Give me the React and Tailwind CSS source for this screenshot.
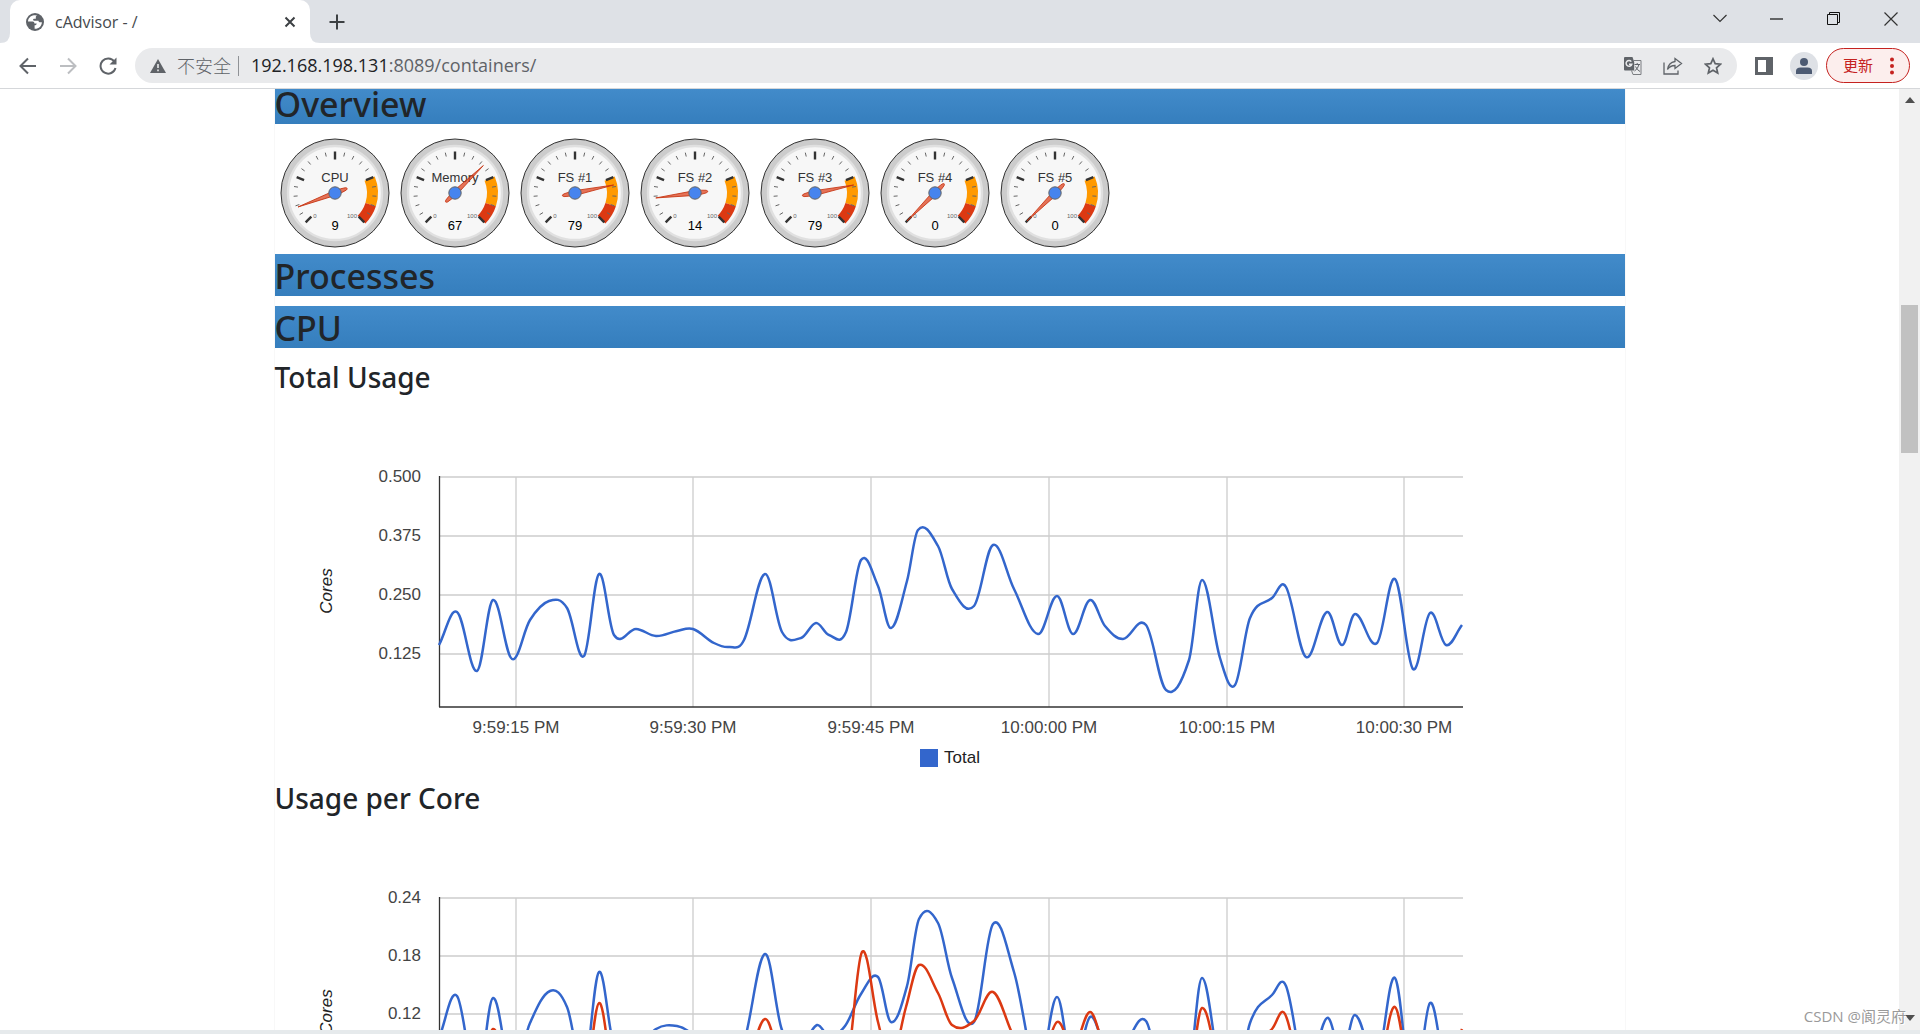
import React from "react";

const UI = "font-['Open_Sans','Noto_Sans_CJK_SC',sans-serif]";

const GRID_X = [
  [516, "9:59:15 PM"],
  [693, "9:59:30 PM"],
  [871, "9:59:45 PM"],
  [1049, "10:00:00 PM"],
  [1227, "10:00:15 PM"],
  [1404, "10:00:30 PM"],
];

const TOTAL = [
  [439, 645], [457, 612], [477, 671], [493, 600], [512, 659], [530, 620], [549, 601], [567, 608],
  [584, 656], [599, 574], [614, 635], [636, 629], [656, 636], [677, 631], [693, 629], [714, 643],
  [729, 647], [744, 640], [765, 574], [782, 632], [801, 638], [816, 623], [829, 635], [846, 632],
  [861, 560], [878, 586], [891, 628], [907, 581], [918, 530], [938, 546], [952, 589], [974, 606],
  [993, 545], [1014, 589], [1038, 634], [1057, 596], [1073, 634], [1090, 600], [1105, 626],
  [1123, 639], [1146, 625], [1166, 690], [1189, 660], [1202, 580], [1220, 658], [1235, 685],
  [1250, 618], [1272, 598], [1286, 587], [1306, 657], [1327, 612], [1342, 645], [1355, 614],
  [1377, 643], [1395, 579], [1413, 669], [1430, 613], [1446, 645], [1462, 625],
];

const CORE_BLUE = [
  [439, 1038], [457, 996], [477, 1085], [493, 998], [512, 1075], [530, 1023], [550, 991], [567, 1007],
  [584, 1070], [599, 972], [614, 1045], [636, 1050], [656, 1029], [677, 1026], [693, 1035],
  [714, 1060], [729, 1062], [744, 1042], [765, 954], [782, 1030], [801, 1045], [817, 1025],
  [829, 1036], [845, 1026], [861, 994], [878, 977], [891, 1022], [907, 986], [919, 919], [938, 923],
  [952, 978], [974, 1022], [993, 924], [1014, 972], [1038, 1072], [1057, 997], [1073, 1070],
  [1090, 1017], [1105, 1045], [1123, 1046], [1146, 1021], [1166, 1098], [1189, 1070], [1202, 978],
  [1220, 1070], [1235, 1098], [1250, 1023], [1272, 995], [1286, 986], [1306, 1075], [1327, 1018],
  [1342, 1055], [1355, 1015], [1377, 1060], [1395, 978], [1413, 1098], [1430, 1003], [1446, 1068],
  [1462, 1045],
];

const CORE_RED = [
  [439, 1060], [457, 1050], [477, 1090], [493, 1029], [512, 1080], [549, 1045], [584, 1090],
  [599, 1003], [614, 1075], [677, 1080], [744, 1070], [765, 1019], [782, 1060], [816, 1045],
  [846, 1068], [862, 952], [878, 1022], [891, 1062], [906, 1007], [919, 965], [938, 993],
  [952, 1025], [974, 1021], [993, 992], [1014, 1037], [1038, 1070], [1057, 1022], [1073, 1048],
  [1090, 1012], [1105, 1045], [1146, 1048], [1166, 1100], [1189, 1080], [1202, 1008], [1220, 1070],
  [1235, 1095], [1250, 1050], [1272, 1029], [1285, 1014], [1306, 1090], [1342, 1060], [1377, 1075],
  [1395, 1007], [1413, 1095], [1430, 1045], [1446, 1075], [1462, 1029],
];

// Smooth curve through the samples, with each slope taken from the neighbours.
function curve(points) {
  const slope = points.map((p, i) => {
    const a = points[i - 1] || p;
    const b = points[i + 1] || p;
    return (b[1] - a[1]) / (b[0] - a[0]);
  });
  let d = `M${points[0][0]},${points[0][1]}`;
  for (let i = 1; i < points.length; i++) {
    const [x0, y0] = points[i - 1];
    const [x1, y1] = points[i];
    const h = (x1 - x0) * 0.36;
    d += `C${x0 + h},${y0 + slope[i - 1] * h} ${x1 - h},${y1 - slope[i] * h} ${x1},${y1}`;
  }
  return d;
}

function Chart({ top, rows, ticks, series, legend, label }) {
  return (
    <svg
      viewBox={`275 ${top - 79} 1350 371`}
      role="img"
      aria-label={label}
      className="block w-full font-['Liberation_Sans',sans-serif] text-[17px]"
    >
      {rows.map((dy) => (
        <path key={dy} d={`M439 ${top + dy}H1463`} stroke="#ccc" strokeWidth="1.3" />
      ))}
      {GRID_X.map(([x]) => (
        <path key={x} d={`M${x} ${top}V${top + 230}`} stroke="#ccc" strokeWidth="1.3" />
      ))}
      <path d={`M439.5 ${top - 1}V${top + 230}`} stroke="#333" strokeWidth="1.3" />
      <path d={`M439 ${top + 230}H1463`} stroke="#333" strokeWidth="1.3" />
      {series.map(([color, pts]) => (
        <path key={color} d={curve(pts)} fill="none" stroke={color} strokeWidth="2.5" />
      ))}
      {ticks.map((t, i) => (
        <text key={t} x="421" y={top + rows[i] + 5} textAnchor="end" fill="#444">{t}</text>
      ))}
      {GRID_X.map(([x, t]) => (
        <text key={t} x={x} y={top + 256} textAnchor="middle" fill="#444">{t}</text>
      ))}
      <text
        transform={`translate(332 ${top + 114}) rotate(-90)`}
        textAnchor="middle"
        fontStyle="italic"
        fill="#222"
      >
        Cores
      </text>
      {legend && (
        <>
          <rect x="920" y={top + 272} width="18" height="18" fill="#3366cc" />
          <text x="944" y={top + 286} fill="#222">{legend}</text>
        </>
      )}
    </svg>
  );
}

function polar(r, value) {
  const a = ((225 - value * 2.7) * Math.PI) / 180;
  return [60 + r * Math.cos(a), 60 - r * Math.sin(a)];
}

function band(from, to) {
  const p = [polar(43, from), polar(43, to), polar(32, to), polar(32, from)].map((q) => q.join(" "));
  return `M${p[0]}A43 43 0 0 1 ${p[1]}L${p[2]}A32 32 0 0 0 ${p[3]}Z`;
}

function Gauge({ name, value }) {
  return (
    <svg
      viewBox="0 0 120 120"
      role="img"
      aria-label={`${name} ${value}`}
      className="size-[120px] font-['Liberation_Sans',sans-serif]"
    >
      <circle cx="60" cy="60" r="54" fill="#ccc" stroke="#333" strokeWidth="1" />
      <circle cx="60" cy="60" r="47" fill="#f7f7f7" stroke="#e0e0e0" strokeWidth="2.4" />
      <path d={band(75, 90)} fill="#ff9900" />
      <path d={band(90, 100)} fill="#dc3912" />
      {Array.from({ length: 21 }, (_, i) => {
        const major = i % 5 === 0;
        const [x1, y1] = polar(41.5, i * 5);
        const [x2, y2] = polar(major ? 33.5 : 37.5, i * 5);
        return (
          <path
            key={i}
            d={`M${x1} ${y1}L${x2} ${y2}`}
            stroke={major ? "#333" : "#666"}
            strokeWidth={major ? 2.4 : 1}
          />
        );
      })}
      <text x="60" y="49" textAnchor="middle" fontSize="13" fill="#333">{name}</text>
      <text x="40" y="85" textAnchor="middle" fontSize="6" fill="#666">0</text>
      <text x="77" y="85" textAnchor="middle" fontSize="6" fill="#666">100</text>
      <text x="60" y="97" textAnchor="middle" fontSize="13" fill="#000">{value}</text>
      <g transform={`rotate(${value * 2.7 - 225} 60 60)`}>
        <path
          d="M99.500 60L60 62.400Q52 62 48.500 61.300Q45.500 60 48.500 58.700Q52 58 60 57.600Z"
          fill="#dc3912"
          fillOpacity="0.7"
          stroke="#c63310"
          strokeWidth="0.8"
        />
      </g>
      <circle cx="60" cy="60" r="6.200" fill="#4684ee" stroke="#666" strokeWidth="1" />
    </svg>
  );
}

function Bar({ size = "h-[42px] leading-[44px]", children }) {
  return (
    <h2 className={`bg-linear-to-b from-[#428bca] to-[#357ebd] font-['Noto_Sans',sans-serif] text-[34px] font-medium ${size}`}>
      {children}
    </h2>
  );
}

function Sub({ children }) {
  return (
    <h3 className="h-[50px] pt-2 font-['Noto_Sans',sans-serif] text-[28px] leading-[42px] font-medium">{children}</h3>
  );
}

function IconButton({ label, className = "", children }) {
  return (
    <button type="button" aria-label={label} className={`flex shrink-0 items-center justify-center ${className}`}>
      {children}
    </button>
  );
}

function TabStrip() {
  return (
    <header className="flex h-[43px] shrink-0 items-end bg-[#dee1e6]">
      <svg width="10" height="10" className="shrink-0"><path d="M10 0V10H0Q10 10 10 0Z" fill="#fff" /></svg>
      <div className="flex h-[43px] w-[300px] items-center rounded-t-[10px] bg-white pr-2 pl-4">
        <svg width="18" height="18" viewBox="0 0 18 18" className="shrink-0">
          <circle cx="9" cy="9" r="9" fill="#5f6368" />
          <path d="M8 2.200C4.500 2.600 2 5.400 2 8.600h4.600c1.300 0 1.800.8 1.800 1.900h2.300c0 1.300-.8 1.700-2.100 1.800v3.500c3.900.3 7.200-2.600 7.300-6.500h-1.500c-1 0-1.900-.4-1.900-1.500H8.200c-1.200 0-1.600-1.700-.4-2h2V4.300c0-1 .6-1.500 1.500-1.700Q9.500 2 8 2.200Z" fill="#fff" />
          <path d="M2 9.500l4 3.800v1.800Q2.400 13.600 2 9.500Z" fill="#5f6368" />
        </svg>
        <span className="ml-[11px] flex-1 text-base text-[#45494d]">cAdvisor - /</span>
        <IconButton label="Close tab" className="size-6">
          <svg width="12" height="12"><path d="M1.500 1.500l9 9M10.500 1.500l-9 9" stroke="#3c4043" strokeWidth="2" /></svg>
        </IconButton>
      </div>
      <svg width="10" height="10" className="shrink-0"><path d="M0 0V10H10Q0 10 0 0Z" fill="#fff" /></svg>
      <IconButton label="New tab" className="h-[43px] w-[34px]">
        <svg width="16" height="16"><path d="M8 .5v15M.5 8h15" stroke="#3c4043" strokeWidth="2" /></svg>
      </IconButton>
      <div className="ml-auto flex h-[37px] items-center self-start">
        <IconButton label="Search tabs" className="h-full w-[57px]">
          <svg width="14" height="9"><path d="M.5 1l6.500 6.500L13.500 1" fill="none" stroke="#333" strokeWidth="1.200" /></svg>
        </IconButton>
        <IconButton label="Minimize" className="h-full w-[57px]">
          <svg width="13" height="2"><path d="M0 1h13" stroke="#111" strokeWidth="1.200" /></svg>
        </IconButton>
        <IconButton label="Restore" className="h-full w-[57px]">
          <svg width="14" height="14" fill="none" stroke="#111"><path d="M.5 2.500h10v10H.5ZM2.500 2.500V.5h10v10h-2" /></svg>
        </IconButton>
        <IconButton label="Close" className="h-full w-[58px]">
          <svg width="14" height="14"><path d="M.5.5l13 13M13.500.5l-13 13" stroke="#333" strokeWidth="1.200" /></svg>
        </IconButton>
      </div>
    </header>
  );
}

function Toolbar() {
  return (
    <nav className="flex h-[46px] shrink-0 items-center border-b border-[#d5d7da] bg-white pr-[10px] pl-2">
      <IconButton label="Back" className="size-10">
        <svg width="18" height="18" fill="none" stroke="#5f6368" strokeWidth="2"><path d="M17 9H2M9 1.500L1.500 9L9 16.500" /></svg>
      </IconButton>
      <IconButton label="Forward" className="size-10">
        <svg width="18" height="18" fill="none" stroke="#bcbec1" strokeWidth="2"><path d="M1 9h15M9 1.500L16.500 9L9 16.500" /></svg>
      </IconButton>
      <IconButton label="Reload" className="size-10">
        <svg width="18" height="18" fill="none" stroke="#5f6368" strokeWidth="2">
          <path d="M15.300 4.500A7.600 7.600 0 1 0 16.500 11" />
          <path d="M17.500 .5V7.500H10.500Z" fill="#5f6368" stroke="none" />
        </svg>
      </IconButton>
      <div className="ml-[7px] flex h-[35px] flex-1 items-center rounded-full bg-[#e9eaec] pr-2 pl-[15px]">
        <svg width="16" height="14" viewBox="0 0 16 14" className="shrink-0">
          <path d="M8 0l8 14H0Z" fill="#5f6368" />
          <path d="M8 5v4M8 10.500v1.700" stroke="#e9eaec" strokeWidth="1.600" />
        </svg>
        <span className="ml-[11px] text-lg leading-6 font-light text-[#5f6368]">不安全</span>
        <span className="ml-[7px] h-5 w-px bg-[#8f9296]" />
        <a href="#address" className="ml-3 flex-1 pb-0.5 text-lg leading-6 text-[#5f6368]">
          <span className="text-[#202124]">192.168.198.131</span>:8089/containers/
        </a>
        <IconButton label="Translate" className="size-10">
          <svg width="18" height="18" viewBox="0 0 18 18">
            <path d="M1 0h7.500l1.700 5v8.500H1a1 1 0 0 1-1-1V1A1 1 0 0 1 1 0Z" fill="#5f6368" />
            <path d="M9.500 3.500H17v14H9l-1.500-4" fill="none" stroke="#7a7d81" strokeWidth="1" />
            <path d="M7.300 4.600A2.900 2.900 0 1 0 7.800 7.200H5" fill="none" stroke="#e9eaec" strokeWidth="1.500" />
            <path d="M10.500 7.500H16M13.200 6v1.500M15 7.500Q14 12 10.500 14M11.500 9.500Q13 13 16 14.500" fill="none" stroke="#5f6368" />
          </svg>
        </IconButton>
        <IconButton label="Share" className="size-10">
          <svg width="20" height="18" viewBox="0 0 20 18" fill="none" stroke="#5f6368" strokeWidth="1.300">
            <path d="M1 5.500V17H15V13.500" />
            <path d="M12 1.500L18.500 6.500L12 11.500V8.500Q7 8.500 4.500 12.500Q5.500 5.500 12 4.500Z" />
          </svg>
        </IconButton>
        <IconButton label="Bookmark" className="ml-1 size-8">
          <svg width="18" height="18" viewBox="0 0 18 18"><path d="M9 1.800l2.200 4.900 5.300.5-4 3.600 1.200 5.200L9 13.200 4.300 16l1.200-5.200-4-3.600 5.300-.5Z" fill="none" stroke="#5f6368" strokeWidth="1.700" /></svg>
        </IconButton>
      </div>
      <IconButton label="Side panel" className="ml-[7px] size-10">
        <svg width="18" height="18"><path d="M0 0h18v18H0ZM3 3v12h8V3Z" fill="#5f6368" fillRule="evenodd" /></svg>
      </IconButton>
      <IconButton label="Profile" className="ml-[6px] size-7 rounded-full bg-[#dee1e6]">
        <svg width="16" height="16" fill="#4d5b73"><circle cx="8" cy="4" r="4" /><path d="M0 16v-3q0-3.500 4.500-3.500h7Q16 9.500 16 13v3Z" /></svg>
      </IconButton>
      <button
        type="button"
        className="ml-2 flex h-[35px] w-[84px] shrink-0 items-center justify-between rounded-full border border-[#c5221f] bg-[#fceeed] pr-[15px] pl-4 text-[15px] text-[#c5221f]"
      >
        更新
        <svg width="4" height="18" fill="#c5221f"><circle cx="2" cy="2.500" r="2" /><circle cx="2" cy="9" r="2" /><circle cx="2" cy="15.500" r="2" /></svg>
      </button>
    </nav>
  );
}

export default function App() {
  return (
    <div className={`relative flex h-screen flex-col overflow-hidden bg-white ${UI}`}>
      <TabStrip />
      <Toolbar />
      <div className="flex min-h-0 flex-1">
        <main className="min-w-0 flex-1 overflow-y-auto [scrollbar-width:none]">
          <div className="mx-auto max-w-[1352px] border-x border-[#f8f8f8] text-[#212529]">
            <Bar size="h-[35px] leading-[31px]">Overview</Bar>
            <div className="flex pt-[9px] pb-px">
              <Gauge name="CPU" value={9} />
              <Gauge name="Memory" value={67} />
              <Gauge name="FS #1" value={79} />
              <Gauge name="FS #2" value={14} />
              <Gauge name="FS #3" value={79} />
              <Gauge name="FS #4" value={0} />
              <Gauge name="FS #5" value={0} />
            </div>
            <Bar>Processes</Bar>
            <div className="h-[10px]" />
            <Bar>CPU</Bar>
            <Sub>Total Usage</Sub>
            <Chart
              top={477}
              rows={[0, 59, 118, 177]}
              label="Total CPU usage"
              ticks={["0.500", "0.375", "0.250", "0.125"]}
              series={[["#3366cc", TOTAL]]}
              legend="Total"
            />
            <Sub>Usage per Core</Sub>
            <Chart
              top={898}
              rows={[0, 58, 116, 175]}
              label="CPU usage per core"
              ticks={["0.24", "0.18", "0.12", "0.06"]}
              series={[["#3366cc", CORE_BLUE], ["#dc3912", CORE_RED]]}
            />
          </div>
        </main>
        <aside aria-hidden="true" className="flex w-[21px] shrink-0 flex-col items-center bg-[#f1f1f1]">
          <svg width="10" height="6" className="mt-2"><path d="M0 6l5-6 5 6Z" fill="#505050" /></svg>
          <div className="mt-[202px] h-[148px] w-[17px] bg-[#c1c1c1]" />
          <svg width="10" height="6" className="mt-auto mb-[9px]"><path d="M0 0l5 6 5-6Z" fill="#505050" /></svg>
        </aside>
      </div>
      <footer className="h-1 shrink-0 bg-[#e6eaec]" />
      <span className="absolute right-[14px] bottom-[8px] text-[15px] leading-5 text-[#999] [text-shadow:1px_1px_0_#fff]">
        CSDN @阆灵府
      </span>
    </div>
  );
}
